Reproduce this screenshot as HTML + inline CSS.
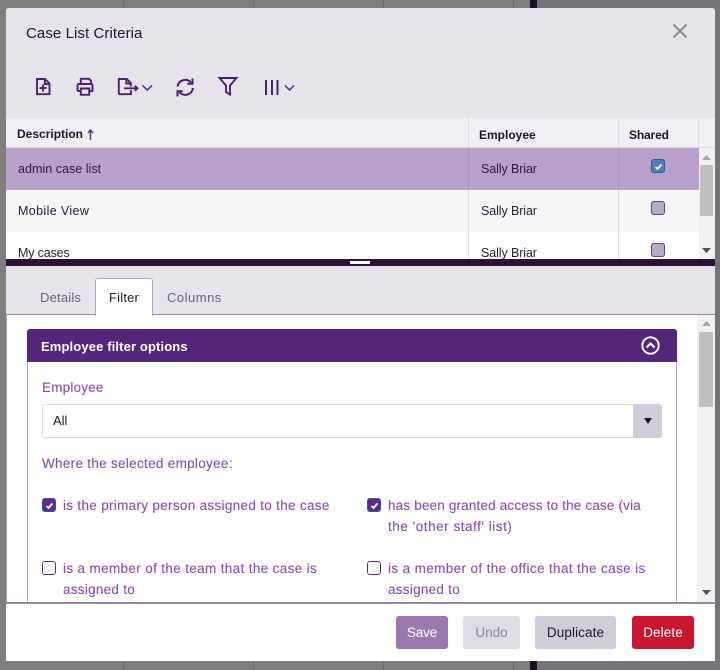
<!DOCTYPE html>
<html><head><meta charset="utf-8"><style>
html,body{margin:0;padding:0}
body{width:720px;height:670px;overflow:hidden;position:relative;background:#7f7f7f;font-family:"Liberation Sans",sans-serif;font-size:12.5px;color:#2a1a3a}
.a{position:absolute}
.t{position:absolute;white-space:nowrap;line-height:18px}
.p{color:#8e48bc;font-size:13.5px;-webkit-text-stroke:.1px #8e48bc}
.cb{position:absolute;width:12px;height:12px;border:1.5px solid #5f2a8a;border-radius:3px;background:#fff}
.cb.on{background:#5f2a8a;border-color:#1f5f95}
.cs{position:absolute;width:12px;height:12px;border:1.5px solid #6b3a94;border-radius:3px;background:#b9abc6}
.v{position:absolute;width:1px;background:#dedbe3}
.btn{position:absolute;top:616px;height:33px;border-radius:3px;text-align:center;line-height:34px;font-size:13.5px}
svg{position:absolute;overflow:visible}
</style></head><body>
<div class="a" style="left:537px;top:0;width:183px;height:670px;background:#757478"></div>
<div class="a" style="left:530px;top:0;width:7px;height:670px;background:#1c0f26"></div>
<div class="a" style="left:123px;top:0;width:1px;height:670px;background:#6c6c6c"></div>
<div class="a" style="left:253px;top:0;width:1px;height:670px;background:#6c6c6c"></div>
<div class="a" style="left:383px;top:0;width:1px;height:670px;background:#6c6c6c"></div>
<div class="a" style="left:513px;top:0;width:1px;height:670px;background:#6c6c6c"></div>

<div class="a" style="left:6px;top:8px;width:709px;height:653px;background:#fff;border-radius:3px 3px 0 0"></div>
<div class="a" style="left:6px;top:8px;width:709px;height:110px;background:#e6e3eb;border-radius:3px 3px 0 0"></div>
<div class="t" style="left:26px;top:25px;font-size:15px;color:#20142c;letter-spacing:.08px">Case List Criteria</div>
<svg style="left:673px;top:24px" width="14" height="14" viewBox="0 0 14 14"><path d="M.5.500L13.500 13.500M13.500.500L.5 13.500" stroke="#85818c" stroke-width="1.900" fill="none"/></svg>

<!-- toolbar -->
<svg style="left:0;top:0" width="320" height="118" fill="none" stroke="#4a2170" stroke-width="1.900">
<path d="M37 79h8l4.500 4.500V94.200H37zM44.800 79v5h4.800"/><path d="M43 84.500v7M39.500 88h7"/>
<path d="M80.800 84v-5.200h8.200l2 2V84M77.500 91V85.800q0-1.800 1.800-1.800h11.400q1.800 0 1.800 1.800V91h-3.500M80.800 91h-3.300"/><path d="M80.800 88.500h8.400V94.800h-8.400z"/>
<path d="M118.800 94.200V79h8l4 4v3.500M126.300 79v4.500h4.500M118.800 94.200h12.200v-4"/><path d="M124 88.300h13.500M134.800 85.800l2.700 2.500-2.700 2.500"/>
<path d="M142.500 85.500l4.800 4.500 4.800-4.500" stroke-width="1.400"/>
<path d="M177.500 86.500a7.800 7.800 0 0 1 13.500-4M193 88a7.800 7.800 0 0 1-13.500 4.300" stroke-width="2"/><path d="M192.500 78.500v5.200h-5.200M177.500 96.500v-5.200h5.200" stroke-width="2"/>
<path d="M219.500 78h17l-6.500 7.500v9l-4-2.500v-6.500z"/>
<path d="M266 80v15M272 80v15M277.500 80v15" stroke-width="2"/>
<path d="M285 85.500l4.500 4.500 4.500-4.500" stroke-width="1.400"/>
</svg>

<!-- table -->
<div class="a" style="left:6px;top:118px;width:709px;height:29px;background:#f2f0f6;border-bottom:1px solid #d9d4e0"></div>
<div class="a" style="left:6px;top:148px;width:693px;height:42px;background:#b9a0c9"></div>
<div class="a" style="left:6px;top:190px;width:693px;height:42px;background:#f6f6f6"></div>
<div class="v" style="left:468px;top:118px;height:141px"></div>
<div class="v" style="left:618px;top:118px;height:141px"></div>
<div class="a" style="left:468px;top:148px;width:1px;height:42px;background:#ac92bf"></div>
<div class="a" style="left:618px;top:148px;width:1px;height:42px;background:#ac92bf"></div>
<div class="a" style="left:698px;top:118px;width:1px;height:29px;background:#dedbe3"></div>
<div class="t" style="left:17px;top:125px;font-weight:bold;font-size:12px;color:#20142c">Description</div>
<svg style="left:87px;top:129px" width="7" height="11"><path d="M3.500 1v10M1 4l2.500-3L6 4" fill="none" stroke="#5f2a8a" stroke-width="1.400"/></svg>
<div class="t" style="left:479px;top:126px;font-weight:bold;font-size:12px;color:#20142c">Employee</div>
<div class="t" style="left:629px;top:126px;font-weight:bold;font-size:12px;color:#20142c;letter-spacing:-.15px">Shared</div>
<div class="t" style="left:18px;top:160px;letter-spacing:.03px">admin case list</div>
<div class="t" style="left:481px;top:160px;letter-spacing:-.1px">Sally Briar</div>
<div class="t" style="left:18px;top:202px;letter-spacing:.37px">Mobile View</div>
<div class="t" style="left:481px;top:202px;letter-spacing:-.1px">Sally Briar</div>
<div class="t" style="left:18px;top:244px;letter-spacing:-.15px">My cases</div>
<div class="t" style="left:481px;top:244px;letter-spacing:-.1px">Sally Briar</div>
<div class="cs" style="left:651px;top:159px;background:#4f7fb8;border-color:#1f5f95"></div>
<svg style="left:654px;top:162px" width="9" height="9"><path d="M1.500 5l2 2 4-4.500" fill="none" stroke="#fff" stroke-width="1.800"/></svg>
<div class="cs" style="left:651px;top:201px"></div>
<div class="cs" style="left:651px;top:243px"></div>

<!-- table scrollbar -->
<div class="a" style="left:699px;top:148px;width:16px;height:111px;background:#f1f1f1"></div>
<div class="a" style="left:700px;top:165px;width:13px;height:51px;background:#bfbfbf"></div>
<svg style="left:702px;top:155px" width="9" height="6"><path d="M4.500 0L9 5H0z" fill="#a8a8a8"/></svg>
<svg style="left:702px;top:248px" width="9" height="6"><path d="M4.500 5L9 0H0z" fill="#505050"/></svg>

<!-- splitter -->
<div class="a" style="left:6px;top:259px;width:709px;height:7px;background:#2a1238"></div>
<div class="a" style="left:350px;top:261px;width:20px;height:3px;background:#fff"></div>

<!-- tabs -->
<div class="a" style="left:6px;top:266px;width:709px;height:48px;background:#e6e3eb;border-bottom:1px solid #9b83a8"></div>
<div class="t" style="left:40px;top:289px;font-size:13px;color:#6b6078;letter-spacing:.2px">Details</div>
<div class="a" style="left:95px;top:278px;width:56px;height:37px;background:#fff;border:1px solid #b4a2c2;border-bottom:none;border-radius:3px 3px 0 0"></div>
<div class="t" style="left:109px;top:289px;font-size:13px;color:#2a1a3a;letter-spacing:.2px">Filter</div>
<div class="t" style="left:167px;top:289px;font-size:13px;color:#6b6078;letter-spacing:.5px">Columns</div>

<!-- filter content -->
<div class="a" style="left:6px;top:315px;width:1px;height:287px;background:#a89ab4"></div>
<div class="a" style="left:27px;top:329px;width:650px;height:33px;background:#55267a;border-radius:3px 3px 0 0"></div>
<div class="a" style="left:27px;top:362px;width:1px;height:240px;background:#b5a6c2"></div>
<div class="a" style="left:676px;top:362px;width:1px;height:240px;background:#b5a6c2"></div>
<div class="t" style="left:41px;top:338px;font-weight:bold;font-size:13px;color:#fff;letter-spacing:.13px">Employee filter options</div>
<svg style="left:641px;top:336px" width="19" height="19" fill="none" stroke="#fff"><circle cx="9.500" cy="9.500" r="8.200" stroke-width="1.900"/><path d="M5.500 11.500l4-4 4 4" stroke-width="2.200"/></svg>

<div class="t p" style="left:42px;top:379px;letter-spacing:.2px">Employee</div>
<div class="a" style="left:42px;top:404px;width:590px;height:32px;border:1px solid #dedbe3;border-radius:3px 0 0 3px;background:#fff"></div>
<div class="a" style="left:633px;top:404px;width:29px;height:34px;background:#d2cbd9;border-radius:0 3px 3px 0"></div>
<svg style="left:644px;top:418px" width="8" height="6"><path d="M0 0h8L4 6z" fill="#20142c"/></svg>
<div class="t" style="left:53px;top:412px;color:#20142c;font-size:13px">All</div>
<div class="t p" style="left:42px;top:455px;letter-spacing:.3px">Where the selected employee:</div>

<div class="cb on" style="left:42px;top:498px"></div>
<svg style="left:45px;top:501px" width="9" height="9"><path d="M1.500 5l2 2 4-4.500" fill="none" stroke="#fff" stroke-width="1.800"/></svg>
<div class="t p" style="left:63px;top:497px;letter-spacing:.31px">is the primary person assigned to the case</div>
<div class="cb on" style="left:367px;top:498px"></div>
<svg style="left:370px;top:501px" width="9" height="9"><path d="M1.500 5l2 2 4-4.500" fill="none" stroke="#fff" stroke-width="1.800"/></svg>
<div class="t p" style="left:388px;top:497px;letter-spacing:.17px">has been granted access to the case (via</div>
<div class="t p" style="left:388px;top:518px;letter-spacing:.53px">the 'other staff' list)</div>
<div class="cb" style="left:42px;top:561px"></div>
<div class="t p" style="left:63px;top:560px;letter-spacing:.35px">is a member of the team that the case is</div>
<div class="t p" style="left:63px;top:581px;letter-spacing:.27px">assigned to</div>
<div class="cb" style="left:367px;top:561px"></div>
<div class="t p" style="left:388px;top:560px;letter-spacing:.37px">is a member of the office that the case is</div>
<div class="t p" style="left:388px;top:581px;letter-spacing:.27px">assigned to</div>

<!-- content scrollbar -->
<div class="a" style="left:697px;top:315px;width:18px;height:287px;background:#f1f1f1"></div>
<div class="a" style="left:699px;top:332px;width:14px;height:75px;background:#bfbfbf"></div>
<svg style="left:702px;top:321px" width="9" height="6"><path d="M4.500 0L9 5H0z" fill="#a8a8a8"/></svg>
<svg style="left:702px;top:590px" width="9" height="6"><path d="M4.500 5L9 0H0z" fill="#505050"/></svg>

<!-- footer -->
<div class="a" style="left:6px;top:602px;width:709px;height:2px;background:#9b83a8"></div>
<div class="btn" style="left:396px;width:52px;background:#9b78b0;color:#fff;letter-spacing:-.1px">Save</div>
<div class="btn" style="left:463px;width:57px;background:#dfdce6;color:#8b8592">Undo</div>
<div class="btn" style="left:535px;width:81px;background:#d2cbd9;color:#20142c;letter-spacing:.1px">Duplicate</div>
<div class="btn" style="left:632px;width:62px;background:#c8172f;color:#fff;letter-spacing:.1px">Delete</div>
</body></html>
